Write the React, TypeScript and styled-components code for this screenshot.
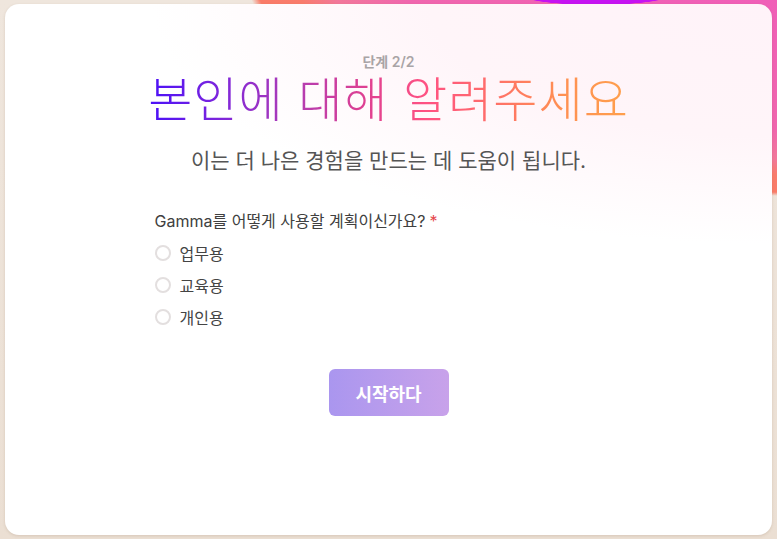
import { createGlobalStyle } from "styled-components";
import styled from "styled-components";

const GlobalStyle = createGlobalStyle`
  * { box-sizing: border-box; }
  html, body { margin: 0; padding: 0; }
  body {
    font-family: "Inter", "Noto Sans CJK KR", sans-serif;
    background: #ede3d9;
  }
`;

const Page = styled.div`
  position: relative;
  width: 777px;
  height: 539px;
  overflow: hidden;
  padding: 4px 5px;
  background:
    radial-gradient(ellipse 75px 10px at 596px -5px, #c612f2 96%, transparent 100%),
    radial-gradient(ellipse 575px 252px at 805px -52px, #f05cbc 0%, #f066ae 72%, #f2789a 84%, #f97c6c 90%, #fa7c68 97%, transparent 98.5%),
    linear-gradient(180deg, #efe6dd 0%, #ebdfd3 100%);
`;

const Card = styled.main`
  height: 531px;
  border-radius: 14px;
  padding-top: 50px;
  background:
    radial-gradient(ellipse 620px 240px at 100% 0%, #fff3f9 0%, #fff5f9 55%, rgba(255, 255, 255, 0) 100%),
    #ffffff;
  box-shadow: 0 1px 3px rgba(120, 90, 60, 0.18);
`;

const Header = styled.header`
  display: flex;
  flex-direction: column;
  align-items: center;
`;

const Step = styled.div`
  font-size: 14px;
  line-height: 16px;
  font-weight: 600;
  color: #a9a4a6;
`;

const Title = styled.h1`
  margin: 3px 0 0;
  font-size: 48px;
  line-height: 54px;
  font-weight: 300;
  letter-spacing: 1px;
  background: linear-gradient(90deg, #4a10f8 0%, #7a24de 14%, #b03cb4 30%, #de4092 45%, #ff5282 58%, #ff7068 72%, #ff9052 86%, #ffa04c 100%);
  -webkit-background-clip: text;
  background-clip: text;
  color: transparent;
`;

const Subtitle = styled.p`
  margin: 20px 0 0;
  font-size: 21px;
  line-height: 28px;
  color: #555;
`;

const Form = styled.form`
  width: 468px;
  margin: 35px auto 0;
  display: flex;
  flex-direction: column;
`;

const Question = styled.div`
  font-size: 16px;
  line-height: 22px;
  color: #404040;
  margin-bottom: 5px;
`;

const Required = styled.span`
  color: #e5484d;
  margin-left: 4px;
`;

const Option = styled.label`
  display: flex;
  align-items: center;
  gap: 9px;
  height: 32px;
  font-size: 16px;
  color: #444;
  cursor: pointer;
`;

const Radio = styled.span`
  width: 16px;
  height: 16px;
  border-radius: 50%;
  border: 2px solid #e3dfdf;
  background: #fff;
  flex-shrink: 0;
`;

const Submit = styled.button`
  align-self: center;
  margin-top: 36px;
  width: 120px;
  height: 47px;
  border: none;
  border-radius: 6px;
  background: linear-gradient(90deg, #aa96ef 0%, #c8a2ea 100%);
  color: #fff;
  font-family: inherit;
  font-size: 18px;
  font-weight: 700;
`;

const options = ["업무용", "교육용", "개인용"];

export default function App() {
  return (
    <>
      <GlobalStyle />
      <Page>
        <Card>
          <Header>
            <Step>단계 2/2</Step>
            <Title>본인에 대해 알려주세요</Title>
            <Subtitle>이는 더 나은 경험을 만드는 데 도움이 됩니다.</Subtitle>
          </Header>
          <Form onSubmit={(e) => e.preventDefault()}>
            <Question>
              Gamma를 어떻게 사용할 계획이신가요?<Required>*</Required>
            </Question>
            {options.map((o) => (
              <Option key={o}>
                <Radio />
                {o}
              </Option>
            ))}
            <Submit type="submit">시작하다</Submit>
          </Form>
        </Card>
      </Page>
    </>
  );
}
